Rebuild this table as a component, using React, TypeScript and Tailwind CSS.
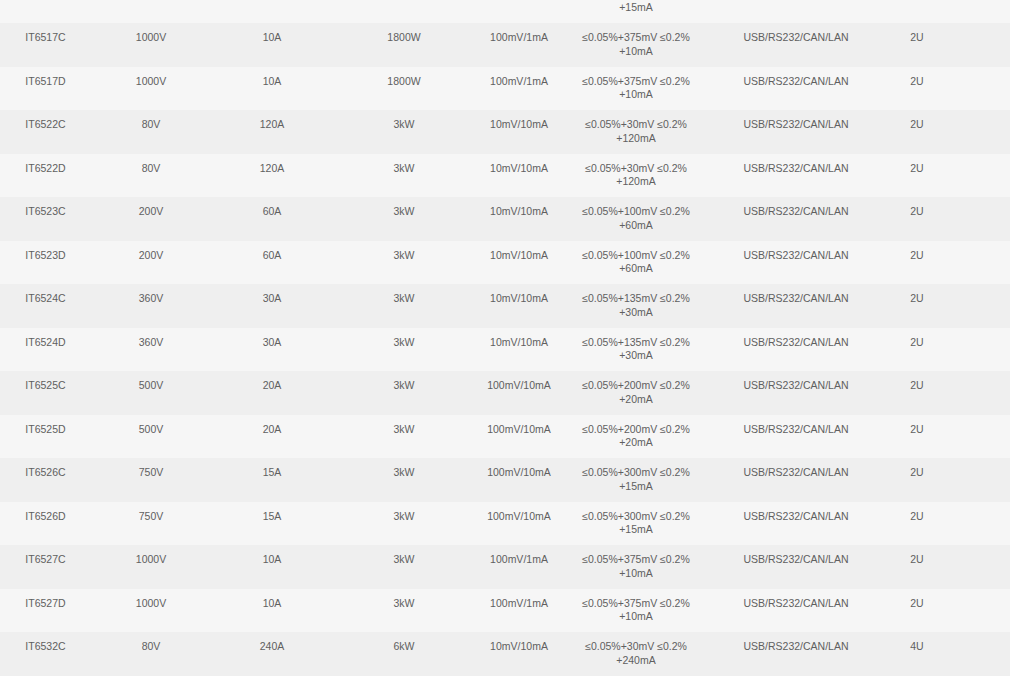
type Row = {
  model: string;
  voltage: string;
  current: string;
  power: string;
  resolution: string;
  accuracy: [string, string];
  ports: string;
  size: string;
};

const rows: Row[] = [
  { model: "IT6517C", voltage: "1000V", current: "10A", power: "1800W", resolution: "100mV/1mA", accuracy: ["≤0.05%+375mV ≤0.2%", "+10mA"], ports: "USB/RS232/CAN/LAN", size: "2U" },
  { model: "IT6517D", voltage: "1000V", current: "10A", power: "1800W", resolution: "100mV/1mA", accuracy: ["≤0.05%+375mV ≤0.2%", "+10mA"], ports: "USB/RS232/CAN/LAN", size: "2U" },
  { model: "IT6522C", voltage: "80V", current: "120A", power: "3kW", resolution: "10mV/10mA", accuracy: ["≤0.05%+30mV ≤0.2%", "+120mA"], ports: "USB/RS232/CAN/LAN", size: "2U" },
  { model: "IT6522D", voltage: "80V", current: "120A", power: "3kW", resolution: "10mV/10mA", accuracy: ["≤0.05%+30mV ≤0.2%", "+120mA"], ports: "USB/RS232/CAN/LAN", size: "2U" },
  { model: "IT6523C", voltage: "200V", current: "60A", power: "3kW", resolution: "10mV/10mA", accuracy: ["≤0.05%+100mV ≤0.2%", "+60mA"], ports: "USB/RS232/CAN/LAN", size: "2U" },
  { model: "IT6523D", voltage: "200V", current: "60A", power: "3kW", resolution: "10mV/10mA", accuracy: ["≤0.05%+100mV ≤0.2%", "+60mA"], ports: "USB/RS232/CAN/LAN", size: "2U" },
  { model: "IT6524C", voltage: "360V", current: "30A", power: "3kW", resolution: "10mV/10mA", accuracy: ["≤0.05%+135mV ≤0.2%", "+30mA"], ports: "USB/RS232/CAN/LAN", size: "2U" },
  { model: "IT6524D", voltage: "360V", current: "30A", power: "3kW", resolution: "10mV/10mA", accuracy: ["≤0.05%+135mV ≤0.2%", "+30mA"], ports: "USB/RS232/CAN/LAN", size: "2U" },
  { model: "IT6525C", voltage: "500V", current: "20A", power: "3kW", resolution: "100mV/10mA", accuracy: ["≤0.05%+200mV ≤0.2%", "+20mA"], ports: "USB/RS232/CAN/LAN", size: "2U" },
  { model: "IT6525D", voltage: "500V", current: "20A", power: "3kW", resolution: "100mV/10mA", accuracy: ["≤0.05%+200mV ≤0.2%", "+20mA"], ports: "USB/RS232/CAN/LAN", size: "2U" },
  { model: "IT6526C", voltage: "750V", current: "15A", power: "3kW", resolution: "100mV/10mA", accuracy: ["≤0.05%+300mV ≤0.2%", "+15mA"], ports: "USB/RS232/CAN/LAN", size: "2U" },
  { model: "IT6526D", voltage: "750V", current: "15A", power: "3kW", resolution: "100mV/10mA", accuracy: ["≤0.05%+300mV ≤0.2%", "+15mA"], ports: "USB/RS232/CAN/LAN", size: "2U" },
  { model: "IT6527C", voltage: "1000V", current: "10A", power: "3kW", resolution: "100mV/1mA", accuracy: ["≤0.05%+375mV ≤0.2%", "+10mA"], ports: "USB/RS232/CAN/LAN", size: "2U" },
  { model: "IT6527D", voltage: "1000V", current: "10A", power: "3kW", resolution: "100mV/1mA", accuracy: ["≤0.05%+375mV ≤0.2%", "+10mA"], ports: "USB/RS232/CAN/LAN", size: "2U" },
  { model: "IT6532C", voltage: "80V", current: "240A", power: "6kW", resolution: "10mV/10mA", accuracy: ["≤0.05%+30mV ≤0.2%", "+240mA"], ports: "USB/RS232/CAN/LAN", size: "4U" },
];

const App = () => {
  return (
    <div className="w-[1010px] h-[676px] overflow-hidden bg-[#f6f6f6] font-['Liberation_Sans',Arial,sans-serif] text-[10.5px] leading-[13.75px] text-[#606060]">
      {/* tail of the row above, only its wrapped accuracy line is in view */}
      <div className="flex h-[23px] pt-[1.25px] text-center whitespace-nowrap bg-[#f6f6f6]">
        <div className="w-[563px]" />
        <div className="w-[146px]">+15mA</div>
      </div>
      {rows.map((row, index) => (
        <div
          key={row.model}
          className={`flex py-2 text-center whitespace-nowrap ${
            index % 2 === 0 ? "bg-[#efefef]" : "bg-[#f6f6f6]"
          }`}
        >
          <div className="w-[91px]">{row.model}</div>
          <div className="w-[120px]">{row.voltage}</div>
          <div className="w-[122px]">{row.current}</div>
          <div className="w-[142px]">{row.power}</div>
          <div className="w-[88px]">{row.resolution}</div>
          <div className="w-[146px]">
            <div>{row.accuracy[0]}</div>
            <div>{row.accuracy[1]}</div>
          </div>
          <div className="w-[174px]">{row.ports}</div>
          <div className="w-[68px]">{row.size}</div>
        </div>
      ))}
    </div>
  );
};

export default App;
